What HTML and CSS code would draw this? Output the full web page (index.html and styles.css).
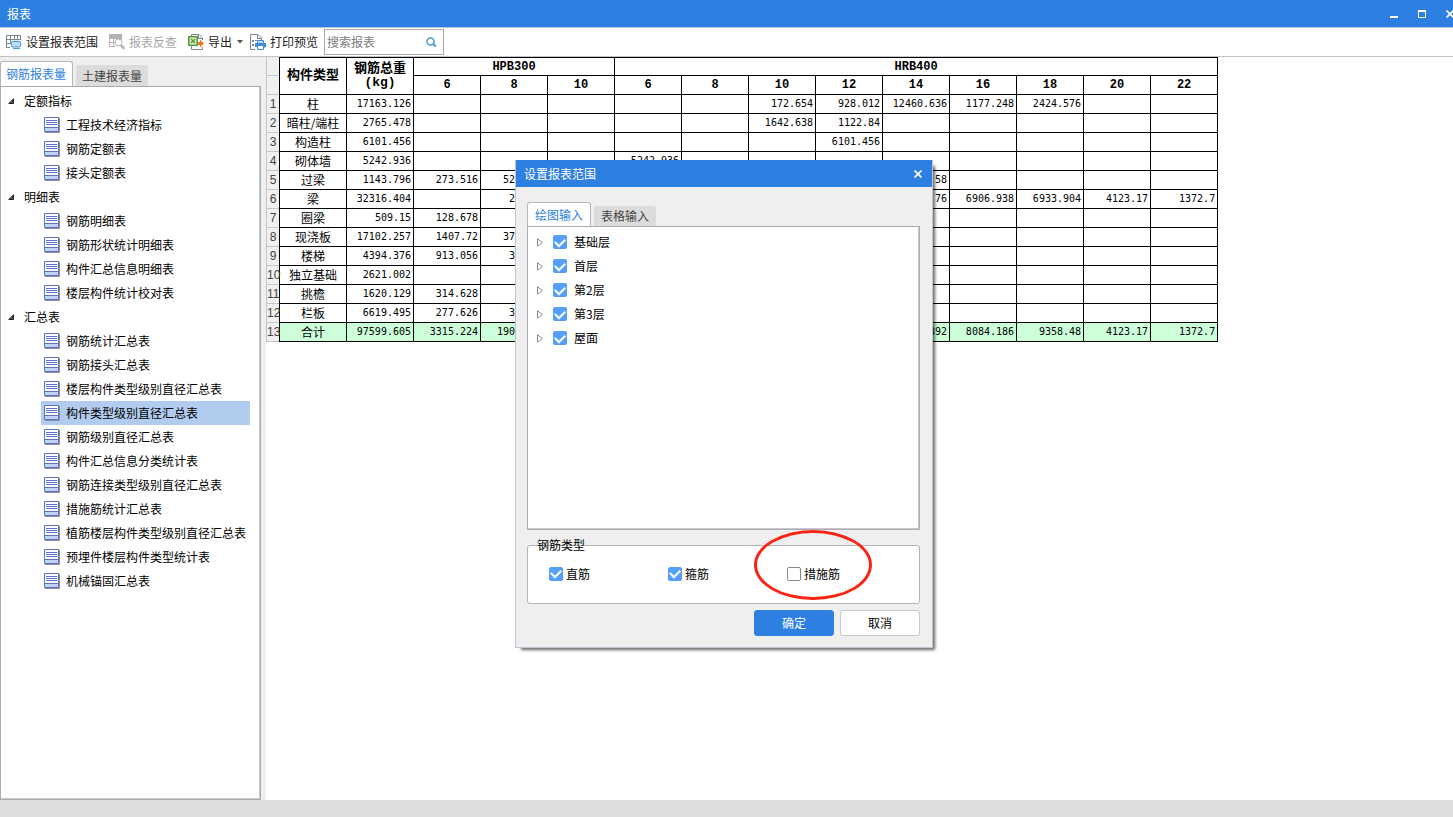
FILE: index.html
```html
<!DOCTYPE html>
<html lang="zh-CN">
<head>
<meta charset="utf-8">
<title>报表</title>
<link rel="stylesheet" href="styles.css">
</head>
<body>
<svg class="defs" aria-hidden="true">
  <symbol id="doc" viewBox="0 0 16 16">
    <path d="M1 15.500h14.500V1" fill="none" stroke="#8e8e94"/>
    <path class="doc-page" d="M.5.500h14v14H.5z" stroke="#5872c4"/>
    <path class="doc-foot" d="M1 11h13v3H1z"/>
    <path d="M1 10.500h13M2 3.500h11M2 5.500h11M2 7.500h11" stroke="#5872c4"/>
  </symbol>
  <symbol id="closed" viewBox="0 0 6 9">
    <path d="M.5.700v7.600L5.300 4.500z" fill="#fff" stroke="#8a8a8a"/>
  </symbol>
  <symbol id="open" viewBox="0 0 7 7">
    <path d="M5.500.800v4.700H.8z" fill="#555" stroke="#222"/>
  </symbol>
  <symbol id="cross" viewBox="0 0 8 8">
    <path d="M.5.500l7 7M7.500.500l-7 7" fill="none" stroke="#fff" stroke-width="1.600"/>
  </symbol>
</svg>

<div class="app">
  <header class="titlebar">
    <h1 class="title">报表</h1>
    <div class="controls">
      <button class="control" aria-label="最小化"><svg width="8" height="8"><path d="M0 6h8v2H0z" fill="#fff"/></svg></button>
      <button class="control" aria-label="最大化"><svg width="8" height="8"><path d="M.5 1v6.500h7V1" fill="none" stroke="#fff"/><path d="M0 0h8v2H0z" fill="#fff"/></svg></button>
      <button class="control" aria-label="关闭"><svg width="8" height="8"><use href="#cross"/></svg></button>
    </div>
  </header>

  <div class="toolbar">
    <button class="tool">
      <svg width="16" height="16" fill="none"><path d="M.5 1.500h14v4.500M.5 1.500v12H4M.5 5.500h14M.5 9.500H5M4.500 1.500v8M8.500 1.500v5M11.500 1.500v5" stroke="#7b8790"/><path d="M6 7.500h8l1 2.500-1 3H6l-1-3z" fill="#bcdcfa" stroke="#4f94df"/><path d="M7 14.500h7" stroke="#4f94df"/></svg>
      <span>设置报表范围</span>
    </button>
    <button class="tool" disabled>
      <svg width="16" height="16" fill="none"><path d="M0 0h13v4H0z" fill="#b3b3b3"/><path d="M.5 0v12.500H6M.5 4.500h12M.5 8.500H6M4.500 3v9.500M8.500 3v2M12.500 3v3" stroke="#b3b3b3"/><circle cx="9.500" cy="8.500" r="3.500" stroke="#b3b3b3"/><path d="M12 11l3.500 4" stroke="#b3b3b3" stroke-width="2.500"/></svg>
      <span>报表反查</span>
    </button>
    <button class="tool">
      <svg width="16" height="16" fill="none"><path d="M3.500 2V.500H11L14.500 4v2M3.500 12v3.500h11V13M10.500.500v4h4" stroke="#7b8790"/><path d="M.8 2.800h8.400v8.400H.8z" fill="#e2f0d8" stroke="#5b9b35" stroke-width="1.600"/><path d="M3 5l4 4M7 5L3 9" stroke="#5b9b35" stroke-width="1.600"/><path d="M10 8h2V5.500L16 9.500l-4 4V11h-2z" fill="#f4751f"/></svg>
      <span>导出</span>
      <svg width="7" height="4"><path d="M1 0h6L4 3.500z" fill="#555"/></svg>
    </button>
    <button class="tool tool-print">
      <svg width="16" height="16" fill="none"><path d="M5 15.500H.5V.500H8L11.500 4v2M7.500.500v4h4" stroke="#7b8790"/><path d="M2 6h2v2H2zM5 6h2v1H5zM2 10h2v2H2z" fill="#7b8790"/><path d="M7.500 9V6.500h6V9M5.500 13V9.500h10V13h-2" fill="#bcdcfa" stroke="#4389e0"/><path d="M5 9h11v4H5z" fill="#4389e0"/><path d="M7.500 11.500h6v4h-6z" fill="#fff" stroke="#4389e0"/></svg>
      <span>打印预览</span>
    </button>
    <label class="search">
      <input class="search-input" type="text" placeholder="搜索报表" aria-label="搜索报表">
      <svg width="11" height="10" fill="none"><circle cx="4.500" cy="4.500" r="3.500" stroke="#4a9ccb" stroke-width="1.600"/><path d="M7 7l3 2.500" stroke="#4a9ccb" stroke-width="2"/></svg>
    </label>
  </div>

  <main class="workspace">
    <aside class="sidebar">
      <div class="tabs" role="tablist">
        <button class="tab tab-active" role="tab" aria-selected="true">钢筋报表量</button>
        <button class="tab" role="tab" aria-selected="false">土建报表量</button>
      </div>
      <div class="panel report-panel">
        <ul class="tree">
          <li class="group"><svg width="7" height="7"><use href="#open"/></svg>定额指标</li>
          <li class="item"><svg width="16" height="16"><use href="#doc"/></svg>工程技术经济指标</li>
          <li class="item"><svg width="16" height="16"><use href="#doc"/></svg>钢筋定额表</li>
          <li class="item"><svg width="16" height="16"><use href="#doc"/></svg>接头定额表</li>
          <li class="group"><svg width="7" height="7"><use href="#open"/></svg>明细表</li>
          <li class="item"><svg width="16" height="16"><use href="#doc"/></svg>钢筋明细表</li>
          <li class="item"><svg width="16" height="16"><use href="#doc"/></svg>钢筋形状统计明细表</li>
          <li class="item"><svg width="16" height="16"><use href="#doc"/></svg>构件汇总信息明细表</li>
          <li class="item"><svg width="16" height="16"><use href="#doc"/></svg>楼层构件统计校对表</li>
          <li class="group"><svg width="7" height="7"><use href="#open"/></svg>汇总表</li>
          <li class="item"><svg width="16" height="16"><use href="#doc"/></svg>钢筋统计汇总表</li>
          <li class="item"><svg width="16" height="16"><use href="#doc"/></svg>钢筋接头汇总表</li>
          <li class="item"><svg width="16" height="16"><use href="#doc"/></svg>楼层构件类型级别直径汇总表</li>
          <li class="item item-selected"><svg width="16" height="16"><use href="#doc"/></svg>构件类型级别直径汇总表</li>
          <li class="item"><svg width="16" height="16"><use href="#doc"/></svg>钢筋级别直径汇总表</li>
          <li class="item"><svg width="16" height="16"><use href="#doc"/></svg>构件汇总信息分类统计表</li>
          <li class="item"><svg width="16" height="16"><use href="#doc"/></svg>钢筋连接类型级别直径汇总表</li>
          <li class="item"><svg width="16" height="16"><use href="#doc"/></svg>措施筋统计汇总表</li>
          <li class="item"><svg width="16" height="16"><use href="#doc"/></svg>植筋楼层构件类型级别直径汇总表</li>
          <li class="item"><svg width="16" height="16"><use href="#doc"/></svg>预埋件楼层构件类型统计表</li>
          <li class="item"><svg width="16" height="16"><use href="#doc"/></svg>机械锚固汇总表</li>
        </ul>
      </div>
    </aside>

    <section class="report">
      <table class="grid">
        <colgroup><col class="col-num"><col class="col-type"><col span="13" class="col-val"></colgroup>
        <thead>
          <tr><td class="num"></td><th class="type" rowspan="2">构件类型</th><th class="weight" rowspan="2">钢筋总重<br>(kg)</th><th colspan="3">HPB300</th><th colspan="9">HRB400</th></tr>
          <tr><td class="num"></td><th>6</th><th>8</th><th>10</th><th>6</th><th>8</th><th>10</th><th>12</th><th>14</th><th>16</th><th>18</th><th>20</th><th>22</th></tr>
        </thead>
        <tbody>
          <tr><td class="num">1</td><td class="type">柱</td><td>17163.126</td><td></td><td></td><td></td><td></td><td></td><td>172.654</td><td>928.012</td><td>12460.636</td><td>1177.248</td><td>2424.576</td><td></td><td></td></tr>
          <tr><td class="num">2</td><td class="type">暗柱/端柱</td><td>2765.478</td><td></td><td></td><td></td><td></td><td></td><td>1642.638</td><td>1122.84</td><td></td><td></td><td></td><td></td><td></td></tr>
          <tr><td class="num">3</td><td class="type">构造柱</td><td>6101.456</td><td></td><td></td><td></td><td></td><td></td><td></td><td>6101.456</td><td></td><td></td><td></td><td></td><td></td></tr>
          <tr><td class="num">4</td><td class="type">砌体墙</td><td>5242.936</td><td></td><td></td><td></td><td>5242.936</td><td></td><td></td><td></td><td></td><td></td><td></td><td></td><td></td></tr>
          <tr><td class="num">5</td><td class="type">过梁</td><td>1143.796</td><td>273.516</td><td class="lead-7">52</td><td></td><td></td><td></td><td></td><td></td><td>58</td><td></td><td></td><td></td><td></td></tr>
          <tr><td class="num">6</td><td class="type">梁</td><td>32316.404</td><td></td><td class="lead-6">2</td><td></td><td></td><td></td><td></td><td></td><td>.76</td><td>6906.938</td><td>6933.904</td><td>4123.17</td><td>1372.7</td></tr>
          <tr><td class="num">7</td><td class="type">圈梁</td><td>509.15</td><td>128.678</td><td></td><td></td><td></td><td></td><td></td><td></td><td></td><td></td><td></td><td></td><td></td></tr>
          <tr><td class="num">8</td><td class="type">现浇板</td><td>17102.257</td><td>1407.72</td><td class="lead-7">37</td><td></td><td></td><td></td><td></td><td></td><td></td><td></td><td></td><td></td><td></td></tr>
          <tr><td class="num">9</td><td class="type">楼梯</td><td>4394.376</td><td>913.056</td><td class="lead-6">3</td><td></td><td></td><td></td><td></td><td></td><td></td><td></td><td></td><td></td><td></td></tr>
          <tr><td class="num">10</td><td class="type">独立基础</td><td>2621.002</td><td></td><td></td><td></td><td></td><td></td><td></td><td></td><td></td><td></td><td></td><td></td><td></td></tr>
          <tr><td class="num">11</td><td class="type">挑檐</td><td>1620.129</td><td>314.628</td><td></td><td></td><td></td><td></td><td></td><td></td><td></td><td></td><td></td><td></td><td></td></tr>
          <tr><td class="num">12</td><td class="type">栏板</td><td>6619.495</td><td>277.626</td><td class="lead-6">3</td><td></td><td></td><td></td><td></td><td></td><td></td><td></td><td></td><td></td><td></td></tr>
          <tr class="total"><td class="num">13</td><td class="type">合计</td><td>97599.605</td><td>3315.224</td><td class="lead-8">190</td><td></td><td></td><td></td><td></td><td></td><td>892</td><td>8084.186</td><td>9358.48</td><td>4123.17</td><td>1372.7</td></tr>
        </tbody>
      </table>
    </section>
  </main>

  <footer class="statusbar"></footer>
</div>

<div class="dialog" role="dialog" aria-labelledby="dialog-title">
  <header class="dialog-head">
    <h2 class="title" id="dialog-title">设置报表范围</h2>
    <button class="control" aria-label="关闭"><svg width="8" height="8"><use href="#cross"/></svg></button>
  </header>
  <div class="dialog-body">
    <div class="tabs" role="tablist">
      <button class="tab tab-active" role="tab" aria-selected="true">绘图输入</button>
      <button class="tab" role="tab" aria-selected="false">表格输入</button>
    </div>
    <div class="panel floor-panel">
      <ul class="tree">
        <li class="floor"><svg width="6" height="9"><use href="#closed"/></svg><label class="check"><input type="checkbox" checked>基础层</label></li>
        <li class="floor"><svg width="6" height="9"><use href="#closed"/></svg><label class="check"><input type="checkbox" checked>首层</label></li>
        <li class="floor"><svg width="6" height="9"><use href="#closed"/></svg><label class="check"><input type="checkbox" checked>第2层</label></li>
        <li class="floor"><svg width="6" height="9"><use href="#closed"/></svg><label class="check"><input type="checkbox" checked>第3层</label></li>
        <li class="floor"><svg width="6" height="9"><use href="#closed"/></svg><label class="check"><input type="checkbox" checked>屋面</label></li>
      </ul>
    </div>
    <fieldset class="types">
      <legend class="types-legend">钢筋类型</legend>
      <div class="types-box">
        <label class="check"><input type="checkbox" checked>直筋</label>
        <label class="check"><input type="checkbox" checked>箍筋</label>
        <label class="check"><input type="checkbox">措施筋</label>
      </div>
    </fieldset>
    <div class="actions">
      <button class="action action-primary">确定</button>
      <button class="action">取消</button>
    </div>
  </div>
  <div class="marker"></div>
</div>
</body>
</html>
```

FILE: styles.css
```css
* { box-sizing: border-box; }

body {
  margin: 0;
  overflow: hidden;
  background: #fff;
  color: #000;
  font: 12px/16px "Noto Sans CJK SC", sans-serif;
}

button, input {
  margin: 0;
  padding: 0;
  border: 0;
  background: none;
  color: inherit;
  font: inherit;
}

svg { display: block; flex: none; }
.defs { position: absolute; width: 0; height: 0; }

.app {
  display: flex;
  flex-direction: column;
  height: 100vh;
}

.title { margin: 0; font-size: 12px; font-weight: 400; }

.titlebar {
  display: flex;
  align-items: center;
  justify-content: space-between;
  height: 28px;
  padding-left: 7px;
  border-bottom: 1px solid #b9c6d6;
  background: #2d7fe2;
  color: #fff;
}
.controls { display: flex; gap: 20px; margin-right: -1px; }
.control { display: flex; }

.toolbar {
  display: flex;
  align-items: center;
  height: 29px;
  padding-left: 6px;
  border-bottom: 1px solid #c4c4c8;
}
.tool {
  display: flex;
  align-items: center;
  gap: 4px;
  margin-right: 11px;
  white-space: nowrap;
  color: #222;
}
.tool:disabled { color: #a8a8a8; }
.tool:nth-child(3) { margin-right: 7px; }
.tool-print { margin-right: 6px; }
.search {
  display: flex;
  align-items: center;
  justify-content: space-between;
  width: 120px;
  height: 26px;
  padding: 0 6px 0 2px;
  border: 1px solid #ababab;
}
.search-input { width: 90px; outline: 0; }
.search-input::placeholder { color: #7c7c7c; opacity: 1; }

.workspace { display: flex; flex: 1; min-height: 0; }

.sidebar {
  display: flex;
  flex-direction: column;
  flex: none;
  width: 266px;
  padding: 4px 5px 0 0;
  background: #efefef;
}

.tabs { display: flex; align-items: flex-end; gap: 3px; height: 25px; }
.tab {
  height: 21px;
  padding: 0 6px;
  border-radius: 3px 3px 0 0;
  background: #dcdcdc;
  color: #444;
}
.tab-active {
  height: 25px;
  border: 1px solid #b8b8bc;
  border-bottom: 0;
  background: #fff;
  color: #2d7fe2;
}
.sidebar .tab-active { padding: 0 6px 0 5px; }

.panel { border: 1px solid #acacae; background: #fff; box-shadow: inset -1px -1px #c8c8cc; }
.report-panel { flex: 1; min-height: 0; padding-top: 2px; }

.tree { margin: 0; padding: 0; list-style: none; }
.group, .item, .floor { display: flex; align-items: center; height: 24px; white-space: nowrap; }
.group { gap: 9px; padding-left: 7px; }
.item { gap: 6px; margin: 0 10px 0 40px; padding-left: 3px; }
.item-selected { background: #b1ccee; }
.doc-page { fill: #fff; }
.doc-foot { fill: #c3d0fa; }
.item-selected .doc-page { fill: #8fc0f5; }
.item-selected .doc-foot { fill: #78aef0; }

.report { flex: 1; min-width: 0; overflow: hidden; }
.grid {
  width: 952px;
  border-spacing: 0;
  table-layout: fixed;
  font: 10px/12px "DejaVu Sans Mono", "Noto Sans CJK SC", monospace;
}
.col-num { width: 13px; }
.col-type { width: 68px; }
.col-val { width: 67px; }
.grid tr { height: 19px; }
.grid td, .grid th {
  padding: 0 2px;
  border: solid #000;
  border-width: 0 1px 1px 0;
  text-align: right;
  white-space: nowrap;
}
.grid th {
  text-align: center;
  font: bold 12px/14px "Liberation Mono", "Noto Sans CJK SC", monospace;
}
.grid thead tr:first-child th { border-top-width: 1px; }
.grid .type { border-left-width: 1px; text-align: center; }
.grid td.type { font: 12px/14px "Noto Sans CJK SC", sans-serif; }
.grid th.type, .grid th.weight { font-size: 13px; }
.grid td.num {
  padding: 0;
  border-color: #c6c6c6;
  border-width: 0 0 1px 1px;
  background: #f0f0f0;
  color: #444;
  text-align: center;
  font: 12px/14px "Liberation Sans", sans-serif;
}
/* values that run on under the dialog, by the length of the number */
.grid .lead-6, .grid .lead-7, .grid .lead-8 { text-align: left; }
.grid .lead-8 { padding-left: 16px; }
.grid .lead-7 { padding-left: 22px; }
.grid .lead-6 { padding-left: 28px; }
.total td { background: #ccffd9; }

.statusbar { height: 17px; background: #dddde0; }

.dialog {
  position: absolute;
  top: 160px;
  left: 515px;
  width: 418px;
  border: 1px solid #bcc5d1;
  border-top: 0;
  background: #efefef;
  box-shadow: 4px 4px 3px -2px rgba(0, 0, 0, 0.6);
}
.dialog-head {
  display: flex;
  align-items: center;
  justify-content: space-between;
  height: 27px;
  padding: 0 10px 0 8px;
  background: #2d7fe2;
  color: #fff;
}
.dialog-body { padding: 15px 12px 11px 11px; }
.dialog .tabs { height: 24px; }
.dialog .tab { height: 20px; padding: 0 7px; }
.dialog .tab-active { height: 24px; }
.floor-panel { height: 304px; padding-top: 3px; }
.floor { gap: 10px; padding-left: 9px; }
.floor .check { gap: 7px; }

.check { display: flex; align-items: center; gap: 3px; }
.check input {
  display: grid;
  place-items: center;
  width: 14px;
  height: 14px;
  border: 1px solid #888;
  border-radius: 2px;
  background: #fff;
  appearance: none;
}
.check input:checked { border-color: #559ffa; background: #559ffa; }
.check input:checked::before {
  width: 8px;
  height: 5px;
  margin-bottom: 2px;
  border: solid #fff;
  border-width: 0 0 2px 2px;
  transform: rotate(-45deg);
  content: "";
}

.types { margin: 7px 0 0; padding: 0; border: 0; min-width: 0; }
.types-legend { height: 16px; margin-bottom: -8px; padding: 0 10px; position: relative; }
.types-box {
  display: grid;
  grid-template-columns: 119px 119px 1fr;
  align-items: center;
  height: 59px;
  padding: 0 0 2px 21px;
  border: 1px solid #b4b4b4;
  border-radius: 3px;
  background: #fff;
}

.actions { display: flex; justify-content: flex-end; gap: 6px; margin-top: 6px; }
.action {
  width: 80px;
  height: 26px;
  border: 1px solid #cacaca;
  border-radius: 3px;
  background: #fff;
}
.action-primary { border-color: #2d7fe2; background: #2d7fe2; color: #fff; }

.marker {
  position: absolute;
  right: 60px;
  bottom: 47px;
  width: 118px;
  height: 70px;
  border: 3px solid #fb2414;
  border-radius: 50%;
  pointer-events: none;
}
```
